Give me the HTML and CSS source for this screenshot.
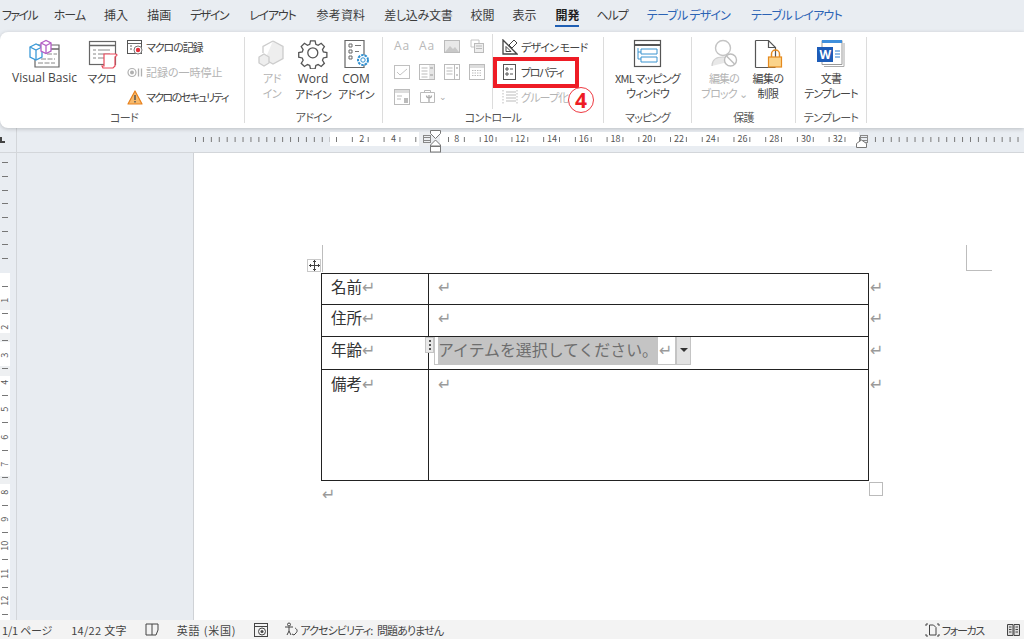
FILE: index.html
```html
<!DOCTYPE html>
<html lang="ja">
<head>
<meta charset="utf-8">
<title>Word</title>
<link rel="stylesheet" href="styles.css">
</head>
<body>
<div class="app">
  <nav class="tabs">
    <span class="tab t-file">ファイル</span><span class="tab t-home">ホーム</span><span class="tab">挿入</span><span class="tab">描画</span><span class="tab t-des">デザイン</span><span class="tab t-lay">レイアウト</span><span class="tab t-ref">参考資料</span><span class="tab t-sas">差し込み文書</span><span class="tab t-tight">校閲</span><span class="tab">表示</span><span class="tab active">開発</span><span class="tab t-home">ヘルプ</span><span class="tab ctx">テーブル デザイン</span><span class="tab ctx">テーブル レイアウト</span>
  </nav>

  <section class="ribbon">
    <div class="group g1">
      <div class="gbody">
        <div class="big w69">
          <svg class="ico" width="32" height="30" viewBox="0 0 32 30"><path d="M8 6h22v22H6v-8" fill="#fff" stroke="#666" stroke-width="1.2"/><path d="M12 10h18" stroke="#666" stroke-width="1.5"/><path d="M12 20h14M9 24h17M18 15h10" stroke="#888" stroke-dasharray="5 1.5"/><path d="M1 8l6-3 6 3v10l-6 3-6-3z" fill="#fff" stroke="#3c9ad8" stroke-width="1.3"/><path d="M1 8l6 3 6-3M7 11v10" fill="none" stroke="#3c9ad8" stroke-width="1.3"/><path d="M12 4l5-2.500 5 2.500v8l-5 2.500-5-2.500z" fill="#fff" stroke="#b45fc6" stroke-width="1.3"/><path d="M12 4l5 2.500 5-2.500M17 6.500v8" fill="none" stroke="#b45fc6" stroke-width="1.300"/></svg>
          <span class="latin">Visual Basic</span>
        </div>
        <div class="big w35">
          <svg class="ico" width="32" height="30" viewBox="0 0 32 30"><rect x="3.500" y="2.500" width="26" height="23" fill="#fff" stroke="#666" stroke-width="1.200"/><path d="M4 6.500h25" stroke="#666" stroke-width="1.500"/><path d="M7 11h3M12 11h12M7 15h3M12 15h12M7 19h3M12 19h6" stroke="#888"/><path d="M18 15h12l1 1-2 2v9l-2 2H17l-1-2h2z" fill="#fff" stroke="#e9495a" stroke-width="1.200"/></svg>
          <span class="tight">マクロ</span>
        </div>
        <div class="col smalls">
          <div class="small"><svg width="16" height="15" viewBox="0 0 16 15"><rect x="0.500" y="0.500" width="14" height="13" fill="#fff" stroke="#555"/><path d="M1 3.500h13M3 6h2M3 9h2" stroke="#666"/><circle cx="11" cy="10" r="4" fill="#fff" stroke="#777"/><circle cx="11" cy="10" r="2.200" fill="#e5313c"/></svg><span class="tight11">マクロの記録</span></div>
          <div class="small off"><svg width="16" height="15" viewBox="0 0 16 15"><circle cx="5" cy="7.500" r="4" fill="#fff" stroke="#b0b0b0" stroke-width="1.200"/><circle cx="5" cy="7.500" r="2" fill="#b0b0b0"/><path d="M11.500 3.500v8M14.500 3.500v8" stroke="#b0b0b0" stroke-width="1.300"/></svg><span>記録の一時停止</span></div>
          <div class="small"><svg width="16" height="15" viewBox="0 0 16 15"><path d="M8 1l7 13H1z" fill="#f7b96b" stroke="#e8811c" stroke-width="1.200" stroke-linejoin="round"/><path d="M8 5v5M8 11v1.600" stroke="#555" stroke-width="1.500"/></svg><span class="tight16">マクロのセキュリティ</span></div>
        </div>
      </div>
      <div class="glabel">コード</div>
    </div>
    <i class="sep"></i>

    <div class="group g2">
      <div class="gbody">
        <div class="big w36 off">
          <svg class="ico" width="30" height="30" viewBox="0 0 30 30"><path d="M16 2l10 5.500v12L16 25l-8-4.500" fill="#eee" stroke="#ccc" stroke-width="1.300"/><path d="M7 18l5 3v6l-5 3-5-3v-6z" fill="#eee" stroke="#ccc" stroke-width="1.300" transform="translate(0 -3)"/><path d="M6 14V7.500L16 2" fill="none" stroke="#ccc" stroke-width="1.300"/></svg>
          <span>アド<br>イン</span>
        </div>
        <div class="big w40">
          <svg class="ico" width="30" height="30" viewBox="0 0 30 30"><path d="M12.500 2h5l.8 3.800 2.500 1 3.300-2.100 3.500 3.500-2.100 3.300 1 2.500 3.800.8v5l-3.800.8-1 2.500 2.100 3.300-3.500 3.500-3.300-2.100-2.500 1-.8 3.800h-5l-.8-3.800-2.500-1-3.300 2.100-3.500-3.500 2.100-3.300-1-2.500-3.800-.8v-5l3.800-.8 1-2.500-2.100-3.300 3.500-3.500 3.300 2.100 2.500-1z" transform="translate(1 0) scale(.92)" fill="none" stroke="#555" stroke-width="1.400"/><circle cx="14.800" cy="13.800" r="5" fill="none" stroke="#555" stroke-width="1.300"/></svg>
          <span><b class="latin">Word</b><br>アドイン</span>
        </div>
        <div class="big w40">
          <svg class="ico" width="30" height="30" viewBox="0 0 30 30"><path d="M4 1.500h19v27H4z" fill="#fff" stroke="#666" stroke-width="1.200"/><path d="M8 5h3v3H8zM8 11h3v3H8zM8 17h3v3H8z" fill="none" stroke="#666"/><path d="M14 6.500h6M14 12.500h4" stroke="#777"/><circle cx="22" cy="21" r="5" fill="#fff" stroke="#2f8fd0" stroke-width="2" stroke-dasharray="2.500 1"/><circle cx="22" cy="21" r="2.200" fill="#fff" stroke="#2f8fd0"/></svg>
          <span><b class="latin">COM</b><br>アドイン</span>
        </div>
      </div>
      <div class="glabel">アドイン</div>
    </div>
    <i class="sep"></i>

    <div class="group g3">
      <div class="gbody">
        <div class="ctrlgrid">
          <span class="aa">Aa</span>
          <span class="aa">Aa</span>
          <svg width="16" height="14" viewBox="0 0 16 14"><rect x="0.500" y="0.500" width="15" height="12" fill="#e8e8e8" stroke="#bbb"/><path d="M1 12l5-6 3 3 2-2 4 5z" fill="#c8c8c8"/></svg>
          <svg width="16" height="16" viewBox="0 0 16 16"><path d="M2 1h8v5M2 1v7h3" fill="none" stroke="#c4c4c4"/><rect x="5.500" y="4.500" width="9" height="9" fill="#eee" stroke="#bbb"/><path d="M7 7h6M7 9.500h6" stroke="#bbb"/></svg>
          <svg width="16" height="16" viewBox="0 0 16 16"><rect x="0.500" y="1.500" width="15" height="13" fill="#fff" stroke="#c0c0c0"/><path d="M3 8l3 3 7-6" fill="none" stroke="#c4c4c4"/></svg>
          <svg width="16" height="16" viewBox="0 0 16 16"><rect x="0.500" y="0.500" width="15" height="15" fill="#fff" stroke="#bbb"/><rect x="10" y="1" width="5" height="14" fill="#e6e6e6"/><path d="M2.500 4h6M2.500 7h6M2.500 10h6M2.500 13h6" stroke="#bbb"/><path d="M11 4h3M11 11h3" stroke="#999"/></svg>
          <svg width="16" height="16" viewBox="0 0 16 16"><rect x="0.500" y="0.500" width="15" height="15" fill="#fff" stroke="#bbb"/><path d="M10.500 1v14" stroke="#bbb"/><path d="M2.500 4h6M2.500 7h6M2.500 10h6" stroke="#bbb"/><path d="M12 4h2M12 11h2" stroke="#999"/></svg>
          <svg width="16" height="16" viewBox="0 0 16 16"><rect x="0.500" y="0.500" width="15" height="15" fill="#fff" stroke="#bbb"/><rect x="1" y="1" width="14" height="3" fill="#ddd"/><path d="M3 6.500h10M3 9h10M3 11.500h10" stroke="#bbb" stroke-dasharray="1.500 1"/></svg>
          <svg width="16" height="16" viewBox="0 0 16 16"><rect x="0.500" y="0.500" width="15" height="15" fill="#fff" stroke="#bbb"/><rect x="1" y="1" width="14" height="3" fill="#ddd"/><path d="M3 7h5M3 10h4" stroke="#bbb"/><rect x="10" y="9" width="4" height="5" fill="#bbb"/></svg>
          <span class="tool"><svg width="17" height="15" viewBox="0 0 17 15"><path d="M1.500 3.500h14v10h-14zM5.500 3.500V1.500h6v2" fill="#fff" stroke="#bbb"/><path d="M10 6v7M7.500 6.500c0 3 5 3 5 0" fill="none" stroke="#aaa" stroke-width="1.300"/></svg><b class="chev">⌄</b></span>
        </div>
        <div class="col designcol">
          <div class="small"><svg width="16" height="16" viewBox="0 0 16 16"><path d="M1 1l14 14H1z" fill="#fff" stroke="#444" stroke-width="1.300"/><path d="M4 7.500l5 5H4z" fill="none" stroke="#444"/><path d="M12 1l3 3-5 5-3-3z" fill="#fff" stroke="#444"/></svg><span class="tight">デザイン モード</span></div>
          <div class="small"><svg width="16" height="16" viewBox="0 0 16 16"><rect x="1.500" y="0.500" width="12" height="15" fill="#fff" stroke="#555"/><path d="M4 4h2v2H4zM4 9h2v2H4z" fill="none" stroke="#555"/><path d="M8 5h3M8 10h3" stroke="#555"/></svg><span class="tighter">プロパティ</span></div>
          <div class="small off"><svg width="16" height="16" viewBox="0 0 16 16"><path d="M1 1v14M15 1v14" stroke="#bbb" stroke-dasharray="1.500 1.500"/><path d="M4 3h10M4 6h10M4 9h10M4 12h10" stroke="#bbb"/></svg><span class="tight">グループ化</span></div>
        </div>
      </div>
      <div class="glabel">コントロール</div>
    </div>
    <i class="sep"></i>

    <div class="group g4">
      <div class="gbody center">
        <div class="big">
          <svg class="ico" width="30" height="30" viewBox="0 0 30 30"><rect x="2.500" y="1.500" width="26" height="26" fill="#fff" stroke="#555" stroke-width="1.200"/><path d="M3 6h25" stroke="#555" stroke-width="2"/><path d="M9 10h16v5H9zM9 18h16v5H9z" fill="#fff" stroke="#3a94d0"/><path d="M6 9v11h3M6 13h3" fill="none" stroke="#3a94d0"/></svg>
          <span class="tight">XML マッピング<br>ウィンドウ</span>
        </div>
      </div>
      <div class="glabel">マッピング</div>
    </div>
    <i class="sep"></i>

    <div class="group g5">
      <div class="gbody">
        <div class="big w56 off">
          <svg class="ico" width="30" height="30" viewBox="0 0 30 30"><circle cx="14" cy="9" r="7.500" fill="#fff" stroke="#c4c4c4" stroke-width="1.400"/><path d="M3 27c0-7 5-9 11-9s8 2 9 4" fill="#e8e8e8" stroke="#d0d0d0" stroke-width="1.200"/><circle cx="21.500" cy="21" r="6" fill="#fff" stroke="#bdbdbd" stroke-width="1.400"/><path d="M17.500 17l8 8" stroke="#bdbdbd" stroke-width="1.400"/></svg>
          <span class="tight">編集の<br>ブロック ⌄</span>
        </div>
        <div class="big w32">
          <svg class="ico" width="30" height="30" viewBox="0 0 30 30"><path d="M2.500 1.500h13l7 7v12M22.500 28.500h-20z M2.500 1.500v27" fill="#fff" stroke="#555" stroke-width="1.200"/><path d="M15.500 1.500v7h7" fill="none" stroke="#555" stroke-width="1.200"/><path d="M18.500 18v-3a4 4 0 0 1 8 0v3" fill="none" stroke="#e58a1f" stroke-width="1.500"/><rect x="15.500" y="18" width="13" height="10" fill="#fbd38a" stroke="#e58a1f" stroke-width="1.200"/></svg>
          <span>編集の<br>制限</span>
        </div>
      </div>
      <div class="glabel">保護</div>
    </div>
    <i class="sep"></i>

    <div class="group g6">
      <div class="gbody center">
        <div class="big">
          <svg class="ico" width="30" height="30" viewBox="0 0 30 30"><path d="M6 1.500h20v24H6z" fill="#fff" stroke="#999"/><path d="M6 1h20v3H6z" fill="#3f8fdc"/><path d="M8 27.500h20V4" fill="none" stroke="#aaa"/><path d="M19 12h5M19 15h5M19 18h5" stroke="#2f7fd0"/><rect x="1" y="8" width="16" height="15" fill="#1d5cb8"/><text x="9" y="20" class="wmark">W</text></svg>
          <span class="tight">文書<br>テンプレート</span>
        </div>
      </div>
      <div class="glabel">テンプレート</div>
    </div>
    <i class="sep"></i>

    <div class="redbox"></div>
    <div class="badge">4</div>
  </section>

  <div class="hruler">
    <div class="corner"><i class="lmark"></i></div>
    <div class="track">
      <div class="seg ticks8 sleft"></div>
      <div class="seg white w1"><span class="n">2</span><span class="n">4</span></div>
      <div class="seg grayband"><i class="colmark"></i></div>
      <div class="seg white w3"><span class="n">8</span><span class="n">10</span><span class="n">12</span><span class="n">14</span><span class="n">16</span><span class="n">18</span><span class="n">20</span><span class="n">22</span><span class="n">24</span><span class="n">26</span><span class="n">28</span><span class="n">30</span><span class="n">32</span></div>
      <div class="seg ticks8 sright"><i class="colmark"></i></div>
      <svg class="indent" width="13" height="25" viewBox="0 0 13 25"><path d="M1.500 2.500h10v3l-5 5-5-5z" fill="#fff" stroke="#777"/><path d="M6.500 12l5 5v1h-10v-1z" fill="#fff" stroke="#777"/><rect x="1.500" y="18.500" width="10" height="5.500" fill="#fff" stroke="#777"/></svg>
      <svg class="rindent" width="13" height="10" viewBox="0 0 13 10"><path d="M1.500 8.500v-4l5-3.500 5 3.500v4z" fill="#fff" stroke="#777"/></svg>
    </div>
  </div>

  <main class="main">
    <aside class="vruler">
      <i class="t"></i><i class="t"></i><i class="t"></i><i class="t"></i><i class="t"></i><i class="t"></i><i class="t"></i><i class="t"></i><i></i>
      <i class="t"></i><b>1</b><i class="t"></i><b>2</b><i class="t"></i><b>3</b><i class="t"></i><b>4</b><i class="t"></i><b>5</b><i class="t"></i><b>6</b><i class="t"></i><b>7</b><i class="t"></i><b>8</b><i class="t"></i><b>9</b><i class="t"></i><b>10</b><i class="t"></i><b>11</b><i class="t"></i><b>12</b><i class="t"></i>
    </aside>
    <div class="side"></div>
    <article class="page">
      <i class="crop crop-l"></i>
      <i class="crop crop-r"></i>
      <span class="mover"><svg width="11" height="11" viewBox="0 0 11 11"><path d="M5.500 0v11M0 5.500h11M4 1.500h3M4 9.500h3M1.500 4v3M9.500 4v3" stroke="#444"/></svg></span>
      <table class="doc">
        <tr class="r1"><td class="c1">名前<em>↵</em></td><td class="c2"><em>↵</em></td><td class="end"><em>↵</em></td></tr>
        <tr class="r2"><td class="c1">住所<em>↵</em></td><td class="c2"><em>↵</em></td><td class="end"><em>↵</em></td></tr>
        <tr class="r3"><td class="c1">年齢<em>↵</em></td><td class="c2 ccell">
          <span class="cc"><span class="grip"></span><span class="cctext">アイテムを選択してください。</span><em>↵</em><span class="ccarrow"></span></span>
        </td><td class="end"><em>↵</em></td></tr>
        <tr class="r4"><td class="c1">備考<em>↵</em></td><td class="c2"><em>↵</em></td><td class="end"><em>↵</em></td></tr>
      </table>
      <span class="resize"></span>
      <p class="after"><em>↵</em></p>
    </article>
  </main>

  <footer class="status">
    <span class="s1">1/1 ページ</span>
    <span class="s2">14/22 文字</span>
    <svg class="s3" width="15" height="13" viewBox="0 0 15 13"><path d="M1 1h6v11H1zM7 1h6v6l-2 5H7" fill="none" stroke="#444"/></svg>
    <span class="s4">英語 (米国)</span>
    <svg class="s5" width="15" height="14" viewBox="0 0 15 14"><rect x="0.500" y="0.500" width="13" height="13" fill="none" stroke="#444"/><path d="M1 3.500h12" stroke="#444"/><circle cx="8" cy="8.500" r="3.500" fill="none" stroke="#444"/><circle cx="8" cy="8.500" r="1.500" fill="#444"/></svg>
    <svg class="s6" width="15" height="15" viewBox="0 0 15 15"><circle cx="5" cy="2.500" r="1.500" fill="none" stroke="#444"/><path d="M1 5h8M5 5v4l-2 4M5 9l2 4M11 6c2 1 3 3 1 5l-2 2-2-1" fill="none" stroke="#444"/></svg>
    <span class="s7">アクセシビリティ: 問題ありません</span>
    <span class="grow"></span>
    <svg class="s8" width="15" height="14" viewBox="0 0 15 14"><path d="M1 3V1h2M12 1h2v2M1 11v2h2M12 13h2v-2" fill="none" stroke="#444"/><path d="M4.500 2h4l2.500 2.500V12h-6.500z" fill="none" stroke="#444"/></svg>
    <span class="s9">フォーカス</span>
    <svg class="s10" width="13" height="12" viewBox="0 0 13 12"><path d="M.5.500h5.500v11H.500zM7 .500h5.500v11H7z" fill="#ddd" stroke="#444"/><path d="M2 3h2.500M2 5.500h2.500M2 8h2.500M8.500 3H11M8.500 5.500H11M8.500 8H11" stroke="#444"/></svg>
  </footer>
</div>
</body>
</html>
```
FILE: styles.css
```css
* { box-sizing: border-box; }
html, body { margin: 0; padding: 0; }
body {
  width: 1024px; height: 639px; overflow: hidden;
  font-family: "Noto Sans CJK JP", "Noto Sans", sans-serif;
  font-feature-settings: "palt";
  color: #444;
  background: #e9edf2;
}
em { font-style: normal; }
svg { display: block; flex: none; }

.app { display: flex; flex-direction: column; width: 1024px; height: 639px; }

/* tabs */
.tabs {
  height: 32px; flex: none;
  display: flex; align-items: center; gap: 19px;
  padding: 0 0 4px 2px;
  font-size: 12px; color: #3c3c3c;
}
.tab { position: relative; white-space: nowrap; }
.t-file { letter-spacing: -1.700px; margin-right: -2px; }
.t-home { letter-spacing: -1px; }
.t-des { letter-spacing: -1.500px; margin-right: 2px; }
.t-lay { letter-spacing: -1.200px; margin-right: 2px; }
.t-ref { letter-spacing: .200px; }
.t-sas { letter-spacing: -.300px; margin-right: -1px; }
.t-tight { margin-right: -1px; }
.tab.active { font-weight: 700; color: #222; margin-right: -2px; }
.tab.active::after {
  content: ""; position: absolute; left: 0; right: 0; bottom: -4px;
  height: 2px; background: #1f5fb4;
}
.tab.ctx { color: #2b63b5; letter-spacing: -.800px; }
.tab.ctx + .tab.ctx { margin-left: 2px; }

/* ribbon */
.ribbon {
  position: relative; flex: none;
  height: 96px;
  display: flex; align-items: stretch;
  padding: 2px 0 0 4px;
  background: #fff;
  border-radius: 8px 0 0 8px;
  box-shadow: 0 1px 4px rgba(0,0,0,.2);
  font-size: 11px; line-height: 14.500px; color: #444;
}
.sep { flex: none; width: 1px; margin: 3px 0 5px; background: #dcdcdc; }
.group { display: flex; flex-direction: column; flex: none; }
.g1 { width: 240px; }
.g2 { width: 137px; }
.g3 { width: 220px; }
.g4 { width: 87px; }
.g5 { width: 103px; }
.g6 { width: 70px; }
.gbody { height: 74px; display: flex; align-items: flex-start; }
.gbody.center { justify-content: center; }
.glabel { height: 18px; line-height: 18px; text-align: center; color: #555; letter-spacing: -.700px; }

.g1 .gbody { padding-left: 6px; }
.g2 .gbody { padding-left: 9px; gap: 3px; }
.g3 .gbody { padding-left: 11px; }
.g5 .gbody { padding-left: 4px; }

.big {
  display: flex; flex-direction: column; align-items: center;
  text-align: center; padding-top: 5px; white-space: nowrap; letter-spacing: -.500px;
}
.big .ico { margin-bottom: 2px; }
.latin { font-family: "Open Sans", "Noto Sans", sans-serif; font-size: 12px; font-weight: 400; letter-spacing: 0; }
.tight { letter-spacing: -.800px; }
.tight11 { letter-spacing: -1.100px; }
.tight16 { letter-spacing: -1.600px; }
.tighter { letter-spacing: -1.400px; }
.w69 { width: 69px; margin-right: 5px; }
.w35 { width: 35px; margin-right: 8px; }
.w36 { width: 36px; }
.w40 { width: 40px; }
.w56 { width: 56px; }
.w32 { width: 32px; }
.off, .off span { color: #b4b4b4; }

.col { display: flex; flex-direction: column; }
.small {
  height: 25px; display: flex; align-items: center; gap: 3px; white-space: nowrap;
  padding-top: 1px;
}

.ctrlgrid {
  width: 99px; height: 75px;
  display: grid; grid-template-columns: repeat(4, 25px); grid-auto-rows: 25px;
  align-items: center; justify-items: start;
  color: #b8b8b8;
  border-right: 1px solid #dcdcdc;
}
.aa { font-family: "Open Sans", sans-serif; font-size: 12px; letter-spacing: 1px; }
.tool { grid-column: span 2; display: flex; align-items: center; gap: 3px; }
.chev { font-weight: 400; font-size: 9px; line-height: 9px; color: #aaa; }
.designcol { padding-left: 9px; }
.wmark { font-family: "Open Sans", sans-serif; font-weight: 700; font-size: 12px; fill: #fff; text-anchor: middle; }

.redbox {
  position: absolute; left: 493px; top: 25px; width: 86px; height: 31px;
  border: 4px solid #ee1c25;
}
.badge {
  position: absolute; left: 568px; top: 55px; width: 26px; height: 26px;
  border: 1px solid #ee3a42; border-radius: 50%; background: rgba(255,255,255,.85);
  color: #ee1c25; font: 700 21px/24px "Noto Sans", sans-serif; text-align: center;
}

/* horizontal ruler */
.hruler {
  flex: none; height: 25px; display: flex;
  border-bottom: 1px solid #d3d6da;
}
.corner { width: 17px; flex: none; border-right: 1px solid #d3d6da; padding: 9px 0 0 0; }
.lmark { display: block; width: 5px; height: 6px; border-left: 2px solid #444; border-bottom: 2px solid #444; }
.track { position: relative; flex: 1; display: flex; padding: 4px 0 0 178px; align-items: flex-start; }
.seg {
  height: 14px; flex: none; display: flex; align-items: center;
  font-size: 9px; color: #555; position: relative;
}
.ticks8 {
  background: linear-gradient(to right, #777 1px, transparent 1px) repeat-x 0 center / 7.935px 5px;
}
.sleft { width: 135px; }
.sright { width: 166px; background-position: 8px center; }
.white {
  background:
    linear-gradient(to right, #777 1px, transparent 1px) repeat-x 6px center / 15.870px 5px,
    #fff;
}
.w1 { width: 89px; padding-left: 16px; }
.grayband { width: 21px; background: #eceef1; }
.w3 { width: 419px; padding-left: 1px; background-position: 8px center, 0 0; }
.n { width: 31.740px; flex: none; text-align: center; line-height: 14px; }
.colmark {
  position: absolute; top: 3px; left: 4px; width: 8px; height: 8px;
  background: repeating-linear-gradient(to bottom, #888 0 1px, transparent 1px 2.500px);
  border-left: 1px solid #888; border-right: 1px solid #888;
}
.sright .colmark { left: 1px; }
.indent { position: absolute; left: 412px; top: 0; }
.rindent { position: absolute; left: 838px; top: 11px; }

/* main */
.main { flex: 1; display: flex; min-height: 0; }
.vruler {
  width: 17px; flex: none;
  border-right: 1px solid #d3d6da;
  padding-top: 3px;
  display: flex; flex-direction: column; align-items: flex-start;
  background: linear-gradient(to bottom,
    transparent 120px, #fff 120px, #fff 148px, #eef0f2 148px, #eef0f2 157px,
    #fff 157px, #fff 180px, #eef0f2 180px, #eef0f2 189px, #fff 189px, #fff 213px,
    #eef0f2 213px, #eef0f2 223px, #fff 223px, #fff 323px, #eef0f2 323px, #eef0f2 331px,
    #fff 331px) no-repeat 0 0 / 10px 100%;
}
.vruler i {
  display: flex; align-items: center;
  width: 10px; height: 13.700px; flex: none;
}
.vruler b {
  display: flex; align-items: center; justify-content: center; flex: none;
  width: 10px; height: 13.700px;
  font-size: 9px; line-height: 10px; font-weight: 400; color: #555; white-space: nowrap;
  writing-mode: vertical-rl; transform: rotate(180deg);
}
.vruler .t::before { content: ""; display: block; width: 6px; height: 1px; margin-left: 2px; background: #777; }
.side {
  width: 177px; flex: none;
  border-right: 1px solid #cfd2d6;
  background: #e8ecf1;
}
.page {
  flex: 1; position: relative; background: #fff;
  padding: 120px 0 0 127px;
  overflow: hidden;
  font-size: 15.500px;
  color: #333;
}
.page em { font-family: "DejaVu Sans", sans-serif; font-size: 16px; line-height: 16px; color: #9a9a9a; }
.crop { position: absolute; display: block; background: #bdbdbd; }
.crop-l { left: 128px; top: 92px; width: 1px; height: 27px; }
.crop-r { left: 772px; top: 92px; width: 1px; height: 26px; }
.crop-r::after { content: ""; position: absolute; left: 0; top: 25px; width: 26px; height: 1px; background: #bdbdbd; }
.mover {
  position: absolute; left: 113px; top: 106px; width: 14px; height: 13px;
  border: 1px solid #c8c8c8; background: #fff;
  display: flex; align-items: center; justify-content: center;
}
.doc { border-collapse: collapse; table-layout: fixed; width: 561px; line-height: 20px; }
.doc td { padding: 2px 0 0; border: 1px solid #222; vertical-align: top; }
.doc td.c1 { width: 107px; padding-left: 9px; }
.doc td.c2 { width: 440px; padding-left: 9px; }
.doc td.end { border: none; width: 14px; padding-left: 1px; }
.r1 { height: 31px; }
.r2 { height: 32px; }
.r3 { height: 33px; }
.r4 { height: 111px; }
.r4 td { padding-top: 3px; }
.doc td.ccell { padding: 0; position: relative; }
.cc {
  display: inline-flex; align-items: flex-start; position: relative;
  height: 28px; margin: 0 0 0 5px; vertical-align: top;
  border: 1px solid #c4c4c4; border-top: none; background: #fff;
  padding-left: 3px;
}
.cctext { display: block; background: #c4c4c4; color: #6e6e6e; font-size: 15.900px; height: 27px; line-height: 26px; white-space: nowrap; overflow: hidden; font-feature-settings: "palt" 0; width: 220px; }
.cc em { padding: 0 3px 0 1px; line-height: 27px; }
.ccarrow {
  width: 15px; height: 27px; background: #e2e2e2; border-left: 2px solid #c4c4c4; position: relative;
}
.ccarrow::after {
  content: ""; position: absolute; left: 3px; top: 11px;
  border: 4px solid transparent; border-top: 4px solid #333; border-bottom: none;
}
.grip {
  position: absolute; left: -10px; top: 0; width: 9px; height: 16px;
  background: repeating-linear-gradient(to bottom, #555 0 2px, transparent 2px 4px) no-repeat center 2px / 2px 11px #e8e8e8;
  border: 1px solid #c4c4c4;
}
.resize {
  position: absolute; left: 675px; top: 329px; width: 14px; height: 14px;
  border: 1px solid #bbb; background: #fff;
}
.after { margin: 3px 0 0 1px; line-height: 18px; }

/* status */
.status {
  flex: none; height: 19px; background: #f3f3f3;
  display: flex; align-items: center;
  padding: 0 4px 0 2px; font-size: 11px; color: #444; white-space: nowrap;
}
.grow { flex: 1; }
.s1 { letter-spacing: -.200px; }
.s2 { margin-left: 19px; letter-spacing: .300px; }
.s3 { margin-left: 18px; }
.s4 { margin-left: 17px; letter-spacing: .800px; }
.s5 { margin-left: 18px; }
.s6 { margin-left: 15px; }
.s7 { margin-left: 1px; letter-spacing: -.900px; word-spacing: 3px; }
.s9 { margin-left: 2px; letter-spacing: -1.300px; }
.s10 { margin-left: 23px; }
```
